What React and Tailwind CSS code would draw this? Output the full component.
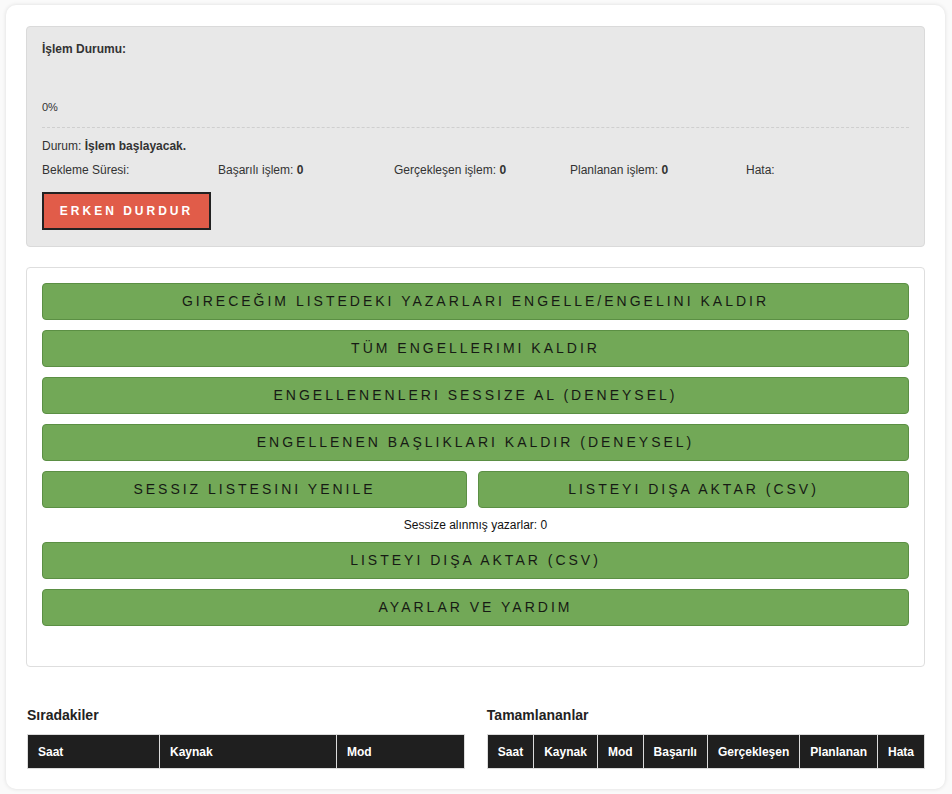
const greenBtn =
  "h-[37px] rounded-[4px] border border-[#5b8f44] bg-[#72a857] text-[14px] uppercase tracking-[3px] text-[#161a14] flex items-center justify-center";

const Stat = ({ label, value }) => (
  <div className="w-[176px] shrink-0">
    {label}
    {value !== undefined && <b className="font-bold"> {value}</b>}
  </div>
);

const HeadCell = ({ children, className = "" }) => (
  <th className={"h-[34px] border border-[#dcdcdc] px-[10px] text-left text-[12px] font-bold text-white " + className}>
    {children}
  </th>
);

export default function App() {
  return (
    <div className="min-h-[794px] bg-[#fafafa] pl-[6px] pr-[7px] pt-[5px] pb-[5px] font-['Liberation_Sans',Arial,sans-serif] text-[#333]">
      <div className="rounded-[10px] bg-white px-5 pt-[21px] pb-[20px] shadow-[0_0_4px_rgba(0,0,0,0.12)]">
        {/* Status panel */}
        <div className="rounded-[4px] border border-[#dadada] bg-[#e8e8e8] px-[15px] pt-[15px] pb-[16px]">
          <div className="text-[12px] font-bold leading-[14px]">İşlem Durumu:</div>
          <div className="mt-[45px] text-[11px] leading-[12px]">0%</div>
          <div className="mt-[14px] border-t border-dashed border-[#cfcfcf]" />
          <div className="mt-[11px] text-[12px] leading-[14px]">
            Durum: <b className="font-bold">İşlem başlayacak.</b>
          </div>
          <div className="mt-[10px] flex text-[12px] leading-[14px]">
            <Stat label="Bekleme Süresi:" />
            <Stat label="Başarılı işlem:" value="0" />
            <Stat label="Gerçekleşen işlem:" value="0" />
            <Stat label="Planlanan işlem:" value="0" />
            <Stat label="Hata:" />
          </div>
          <button className="mt-[15px] flex h-[38px] w-[169px] items-center justify-center border-2 border-[#222] bg-[#e15c49] text-[12px] font-bold uppercase tracking-[0.25em] text-white">
            Erken Durdur
          </button>
        </div>

        {/* Action buttons */}
        <div className="mt-[20px] rounded-[4px] border border-[#dedede] bg-white px-[15px] pt-[15px] pb-[40px]">
          <div className="flex flex-col gap-[10px]">
            <button className={greenBtn + " w-full"}>Gireceğim listedeki yazarları engelle/engelini kaldır</button>
            <button className={greenBtn + " w-full"}>TÜM ENGELLERIMI KALDIR</button>
            <button className={greenBtn + " w-full"}>ENGELLENENLERI SESSIZE AL (DENEYSEL)</button>
            <button className={greenBtn + " w-full"}>ENGELLENEN BAŞLIKLARI KALDIR (DENEYSEL)</button>
            <div className="flex gap-[11px]">
              <button className={greenBtn + " w-[425px] shrink-0"}>SESSIZ LISTESINI YENILE</button>
              <button className={greenBtn + " flex-1"}>LISTEYI DIŞA AKTAR (CSV)</button>
            </div>
          </div>
          <div className="my-[10px] text-center text-[12px] leading-[14px] text-[#111]">Sessize alınmış yazarlar: 0</div>
          <div className="flex flex-col gap-[10px]">
            <button className={greenBtn + " w-full"}>LISTEYI DIŞA AKTAR (CSV)</button>
            <button className={greenBtn + " w-full"}>AYARLAR VE YARDIM</button>
          </div>
        </div>

        {/* Tables */}
        <div className="mt-[40px] flex gap-[22px] pl-px">
          <div className="flex-1">
            <h3 className="mb-[11px] text-[14px] font-bold leading-[16px] text-[#222]">Sıradakiler</h3>
            <table className="w-full border-collapse bg-[#1f1f1f]">
              <thead>
                <tr>
                  <HeadCell className="w-[132px]">Saat</HeadCell>
                  <HeadCell className="w-[177px]">Kaynak</HeadCell>
                  <HeadCell>Mod</HeadCell>
                </tr>
              </thead>
            </table>
          </div>
          <div className="flex-1">
            <h3 className="mb-[11px] text-[14px] font-bold leading-[16px] text-[#222]">Tamamlananlar</h3>
            <table className="w-full border-collapse bg-[#1f1f1f]">
              <thead>
                <tr>
                  <HeadCell className="w-[47px]">Saat</HeadCell>
                  <HeadCell className="w-[63px]">Kaynak</HeadCell>
                  <HeadCell className="w-[46px]">Mod</HeadCell>
                  <HeadCell className="w-[64px]">Başarılı</HeadCell>
                  <HeadCell className="w-[92px]">Gerçekleşen</HeadCell>
                  <HeadCell className="w-[78px]">Planlanan</HeadCell>
                  <HeadCell>Hata</HeadCell>
                </tr>
              </thead>
            </table>
          </div>
        </div>
      </div>
    </div>
  );
}
